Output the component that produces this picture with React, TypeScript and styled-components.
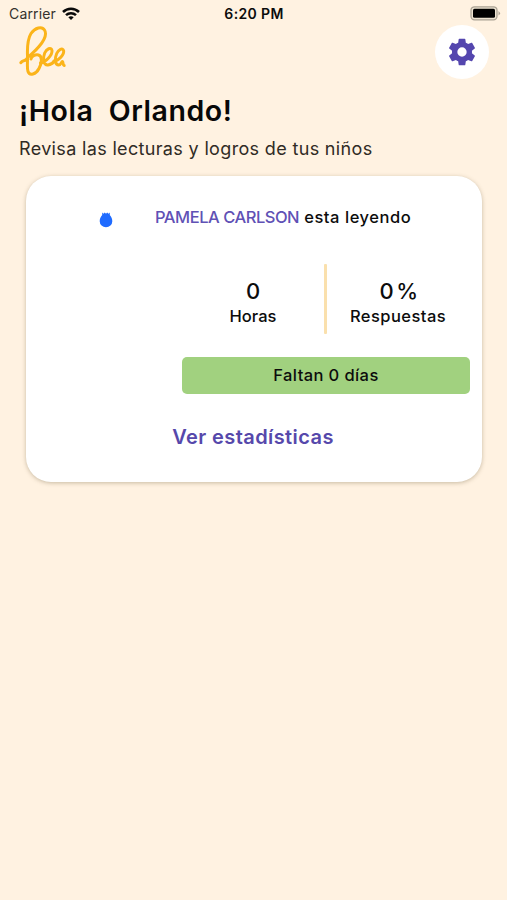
import React from "react";
import styled, { createGlobalStyle } from "styled-components";

const GlobalStyle = createGlobalStyle`
  * { box-sizing: border-box; }
  body { margin: 0; background: #fff2e1; }
  h1, p { margin: 0; }
`;

const Screen = styled.main`
  width: 507px;
  height: 900px;
  overflow: hidden;
  background: #fff2e1;
  color: #0c0c0c;
  font-family: Inter, "Liberation Sans", sans-serif;
`;

const StatusBar = styled.div`
  display: grid;
  grid-template-columns: 1fr auto 1fr;
  align-items: center;
  height: 26px;
  padding: 1px 8px 0 9px;
`;

const Carrier = styled.div`
  display: flex;
  align-items: center;
  gap: 6px;
`;

const BatteryIcon = styled.svg`
  justify-self: end;
  margin-right: -2px;
`;

const Header = styled.header`
  display: flex;
  justify-content: space-between;
  height: 66px;
  padding: 0 18px 0 19px;
`;

const SettingsButton = styled.button`
  display: flex;
  align-items: center;
  justify-content: center;
  width: 54px;
  height: 54px;
  padding: 0 1px 0 0;
  margin-top: -1px;
  border: 0;
  border-radius: 50%;
  background: #fff;
`;

const Text = styled.span<{ $size: number; $line: number; $weight?: number; $spacing?: number; $color?: string }>`
  display: block;
  font-size: ${(p) => p.$size}px;
  line-height: ${(p) => p.$line}px;
  font-weight: ${(p) => p.$weight ?? 400};
  letter-spacing: ${(p) => p.$spacing ?? 0}px;
  color: ${(p) => p.$color ?? "inherit"};
  white-space: pre;
`;

const Greeting = styled.section`
  padding-left: 19px;
  height: 84px;
`;

const Card = styled.article`
  display: flex;
  flex-direction: column;
  width: 456px;
  height: 306px;
  margin-left: 26px;
  border-radius: 25px;
  background: #fff;
  box-shadow: 0 1px 4px rgba(110, 95, 60, 0.38);
`;

const ReaderRow = styled.div`
  display: flex;
  align-items: center;
  height: 82px;
  padding-left: 73px;
`;

const DropIcon = styled.svg`
  margin-top: 6px;
`;

const ReaderName = styled.div`
  display: flex;
  gap: 5px;
  margin-left: 42px;
`;

const Stats = styled.div`
  display: grid;
  grid-template-columns: 142px 3px 142px;
  height: 70px;
  margin: 6px 0 0 156px;
`;

const Stat = styled.div`
  display: flex;
  flex-direction: column;
  align-items: center;
  padding-top: 15px;
`;

const Divider = styled.div`
  background: #fae0ad;
  border-radius: 1px;
`;

const Remaining = styled.div`
  display: flex;
  align-items: center;
  justify-content: center;
  width: 288px;
  height: 37px;
  padding-bottom: 1px;
  margin: 23px 0 0 156px;
  border-radius: 5px;
  background: #a1d17f;
`;

const StatsLink = styled.a`
  align-self: center;
  margin: 29px 2px 0 0;
`;

export default function App() {
  return (
    <>
      <GlobalStyle />
      <Screen>
        <StatusBar>
          <Carrier>
            <Text $size={14} $line={20} $spacing={0.15} $color="#35312d">Carrier</Text>
            <svg width="18" height="14" viewBox="0 0 18 14" fill="none" stroke="#0a0a0a" strokeWidth="2.5">
              <path d="M1 5C5.5 .5 12.500 .5 17 5" />
              <path d="M4 8.200C6.800 5.500 11.200 5.500 14 8.200" />
              <path d="M6.300 10.300C7.900 8.900 10.100 8.900 11.700 10.300L9 13Z" fill="#0a0a0a" stroke="none" />
            </svg>
          </Carrier>
          <Text $size={14} $line={20} $weight={600} $spacing={0.35}>6:20 PM</Text>
          <BatteryIcon width="31" height="15" viewBox="0 0 31 15">
            <rect x="1" y=".8" width="26" height="13" rx="3.500" fill="#eee4d2" stroke="#aaa294" strokeWidth="1.300" />
            <rect x="3" y="2.800" width="22" height="9" rx="1.500" fill="#000" />
            <path d="M28.500 5Q31.500 7.300 28.500 9.600Z" fill="#aaa294" />
          </BatteryIcon>
        </StatusBar>
        <Header>
          <svg width="48" height="52" viewBox="19 26 48 52" fill="none" stroke="#fbb41a" strokeWidth="3" strokeLinecap="round" strokeLinejoin="round">
            <path d="M20.900 62.600C22.500 60 24.500 61.500 26 59.500C28.500 56 34.500 52 39 46.500C44.500 40 47 34 44.500 30C42 26 35 27.500 31 33.500C27.500 39 27.200 48 27.500 56C27.700 63 26.800 68 28 71.500C29.500 76 36 74.500 39 68.500C42.500 62 42 56 38.500 55C35 54.200 31.500 56.500 31 59" />
            <path d="M40.500 63C45.500 62.500 52.500 55 52 50.500C51 46.500 46.500 49 44.700 53C42.200 59 43.800 65.500 48 65C51 64.700 53.500 62.500 55 60.500" />
            <path d="M54 61C58.500 61 64.500 54.500 63.600 50.700C62.600 47.300 58.500 49.500 56.700 53.500C54.300 59 55 65 58.700 65C61.200 65 61.500 61 62.500 61.500C63.400 62 62.600 65.300 64.200 65.500" />
          </svg>
          <SettingsButton aria-label="Ajustes">
            <svg width="32" height="32" viewBox="0 0 24 24" fill="#5446ae">
              <path d="M19.430 12.980c.04-.32.070-.64.070-.98s-.03-.66-.07-.98l2.110-1.650c.19-.15.240-.42.120-.64l-2-3.460c-.12-.22-.39-.3-.61-.22l-2.490 1c-.52-.4-1.080-.73-1.690-.98l-.38-2.650C14.460 2.180 14.250 2 14 2h-4c-.25 0-.46.180-.49.420l-.38 2.650c-.61.250-1.170.590-1.690.98l-2.490-1c-.23-.09-.49 0-.61.220l-2 3.460c-.13.220-.07.490.12.640l2.110 1.650c-.04.320-.07.650-.07.980s.03.660.070.980l-2.110 1.650c-.19.150-.24.420-.12.640l2 3.460c.12.220.39.3.61.220l2.490-1c.52.4 1.080.730 1.690.98l.38 2.650c.03.240.24.420.49.420h4c.25 0 .46-.18.490-.42l.38-2.650c.61-.25 1.170-.59 1.690-.98l2.490 1c.23.090.49 0 .61-.22l2-3.460c.12-.22.070-.49-.12-.64zM12 15.500A3.500 3.500 0 1 1 12 8.500a3.500 3.500 0 0 1 0 7Z" />
            </svg>
          </SettingsButton>
        </Header>
        <Greeting>
          <Text as="h1" $size={28.5} $line={38} $weight={600} $spacing={0.55} $color="#080808">¡Hola  Orlando!</Text>
          <Text as="p" $size={18} $line={37} $spacing={0.34} $color="#302b25">Revisa las lecturas y logros de tus niños</Text>
        </Greeting>
        <Card>
          <ReaderRow>
            <DropIcon width="14" height="16" viewBox="0 0 14 16" fill="#1f6bff">
              <path d="M3.200 .5L4.500 1.800L5.800 .5L7 1.800L8.200 .5L9.500 1.800L10.800 .5V3C12.500 4.800 13.300 7 13.300 9.200A6.300 6.100 0 0 1 .7 9.200C.7 7 1.500 4.800 3.200 3Z" />
            </DropIcon>
            <ReaderName>
              <Text $size={16.5} $line={20} $weight={500} $spacing={-0.47} $color="#6051b5">PAMELA CARLSON</Text>
              <Text $size={16.5} $line={20} $weight={500} $spacing={0.56}>esta leyendo</Text>
            </ReaderName>
          </ReaderRow>
          <Stats>
            <Stat>
              <Text $size={22} $line={25} $weight={500}>0</Text>
              <Text $size={16.5} $line={25} $weight={500}>Horas</Text>
            </Stat>
            <Divider />
            <Stat>
              <Text $size={22} $line={25} $weight={500} $spacing={-1.6}>0 %</Text>
              <Text $size={16.5} $line={25} $weight={500} $spacing={0.45}>Respuestas</Text>
            </Stat>
          </Stats>
          <Remaining>
            <Text $size={16.5} $line={22} $weight={500} $spacing={0.4}>Faltan 0 días</Text>
          </Remaining>
          <StatsLink>
            <Text $size={20} $line={28} $weight={600} $spacing={0.42} $color="#5648ab">Ver estadísticas</Text>
          </StatsLink>
        </Card>
      </Screen>
    </>
  );
}
